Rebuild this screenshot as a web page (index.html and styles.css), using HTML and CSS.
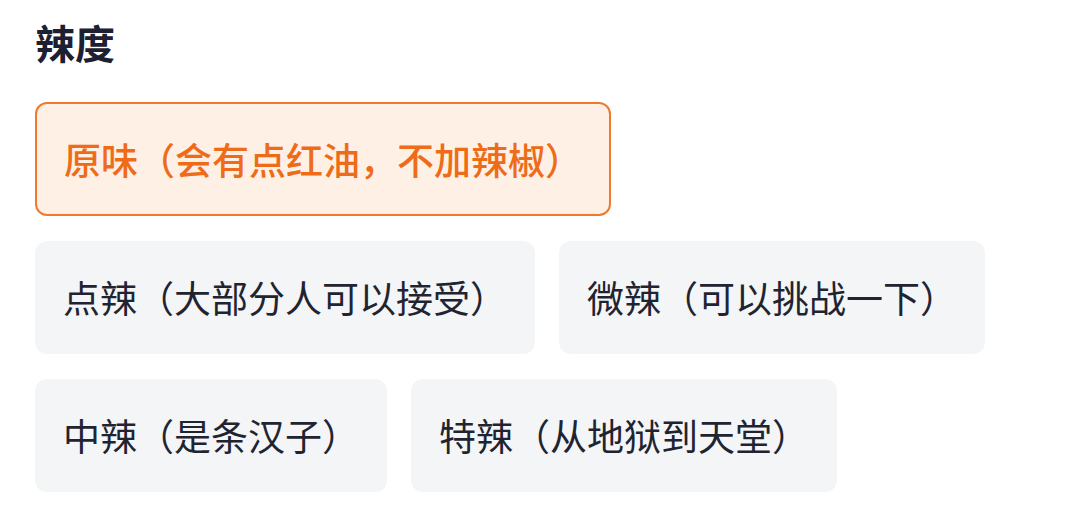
FILE: index.html
```html
<!DOCTYPE html>
<html lang="zh-CN">
<head>
    <meta charset="UTF-8">
    <meta name="viewport" content="width=device-width, initial-scale=1.0">
    <title>辣度</title>
    <link rel="stylesheet" href="styles.css">
</head>
<body>
    <div class="spice-panel">
        <h2 class="panel-title">辣度</h2>

        <!-- 辣度选项 -->
        <div class="option-list">
            <div class="option active">原味（会有点红油，不加辣椒）</div>
            <div class="option">点辣（大部分人可以接受）</div>
            <div class="option">微辣（可以挑战一下）</div>
            <div class="option">中辣（是条汉子）</div>
            <div class="option">特辣（从地狱到天堂）</div>
        </div>
    </div>
</body>
</html>
```

FILE: styles.css
```css
body {
    margin: 0;
    padding: 0;
    background-color: #fff;
    font-family: "Noto Sans CJK SC", "Noto Sans", sans-serif;
}

.spice-panel {
    padding: 19px 35px 0 35px;
}

.panel-title {
    margin: 0 0 36px 0;
    font-size: 40px;
    line-height: 47px;
    font-weight: bold;
    color: #1c2030;
}

.option-list {
    display: flex;
    flex-wrap: wrap;
    gap: 25px 24px;
    max-width: 1010px;
}

.option {
    box-sizing: border-box;
    display: flex;
    align-items: center;
    height: 113px;
    padding: 0 26px;
    border: 2px solid transparent;
    border-radius: 12px;
    background-color: #f3f5f7;
    color: #1f2430;
    font-size: 37px;
    line-height: 1;
}

.option.active {
    height: 114px;
    padding: 0 27px;
    border-color: #f07a2c;
    background-color: #fff0e6;
    color: #ee6c18;
    font-weight: 500;
}
```
